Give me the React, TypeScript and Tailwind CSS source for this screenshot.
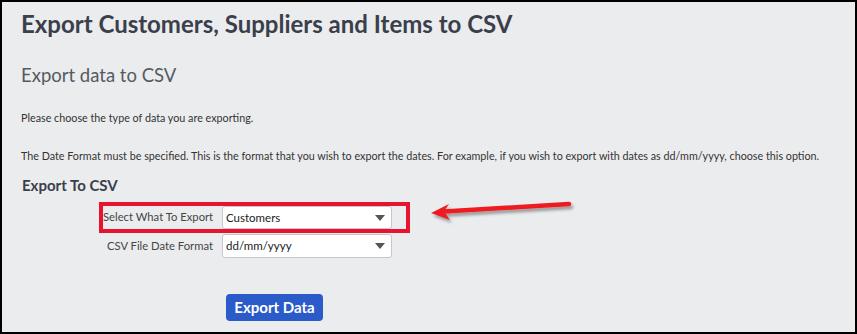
export default function App() {
  return (
    <div
      className="relative w-[857px] h-[334px] overflow-hidden border-2 border-black bg-[#ebecee] text-[#333]"
      style={{ fontFamily: 'Lato, "Liberation Sans", sans-serif' }}
    >
      <div className="pl-[19px]">
        {/* Heading */}
        <h1 className="pt-[6px] text-[24px] font-bold leading-[32px] text-[#3a3f4b]">
          Export Customers, Suppliers and Items to CSV
        </h1>

        <h2 className="mt-[22px] text-[18.5px] leading-[26px] text-[#555a63]">Export data to CSV</h2>

        <p className="mt-[23px] text-[10.75px] leading-[14px]">Please choose the type of data you are exporting.</p>
        <p className="mt-[24px] whitespace-nowrap text-[10.75px] leading-[14px]">
          The Date Format must be specified. This is the format that you wish to export the dates. For example, if you
          wish to export with dates as dd/mm/yyyy, choose this option.
        </p>

        <h3 className="mt-[12px] pl-[1px] text-[15px] font-bold leading-[20px] text-[#3a3f4b]">Export To CSV</h3>
      </div>

      {/* Form */}
      <div className="mt-[7px] pl-[97px]">
        <div className="inline-flex items-center border-4 border-[#e8142d] pr-[14px]">
          <label className="w-[110px] whitespace-nowrap text-right text-[11.25px] text-[#444]">Select What To Export</label>
          <Select value="Customers" className="ml-[9px] h-[23px]" />
        </div>
        <div className="mt-[1px] ml-[4px] flex items-center">
          <label className="w-[110px] whitespace-nowrap text-right text-[11.25px] text-[#444]">CSV File Date Format</label>
          <Select value="dd/mm/yyyy" className="ml-[9px] h-[24px]" />
        </div>
        <button className="mt-[36px] ml-[127px] h-[27px] w-[97px] rounded-[4px] bg-[#2a5bc9] text-[15px] font-bold text-white">
          Export Data
        </button>
      </div>

      {/* Annotation arrow */}
      <svg className="absolute left-[420px] top-[192px]" width="160" height="34" viewBox="0 0 160 34">
        <defs>
          <filter id="sh" x="-10%" y="-50%" width="120%" height="200%">
            <feDropShadow dx="2" dy="3" stdDeviation="1.5" floodColor="#000" floodOpacity="0.35" />
          </filter>
        </defs>
        <g filter="url(#sh)">
          <path d="M22 17.5 L147 10" stroke="#ee1c24" strokeWidth="4.5" strokeLinecap="round" />
          <path d="M9 19 L27 10 L22 17.5 L28 26 Z" fill="#ee1c24" />
        </g>
      </svg>
    </div>
  );
}

function Select({ value, className }: { value: string; className: string }) {
  return (
    <div
      className={`flex w-[170px] items-center justify-between rounded-[3px] border border-[#c5c6cf] bg-white pl-[3px] pr-[6px] text-[11.5px] text-[#222] ${className}`}
    >
      <span>{value}</span>
      <svg width="10" height="6" viewBox="0 0 10 6">
        <path d="M0 0 L10 0 L5 6 Z" fill="#555" />
      </svg>
    </div>
  );
}
